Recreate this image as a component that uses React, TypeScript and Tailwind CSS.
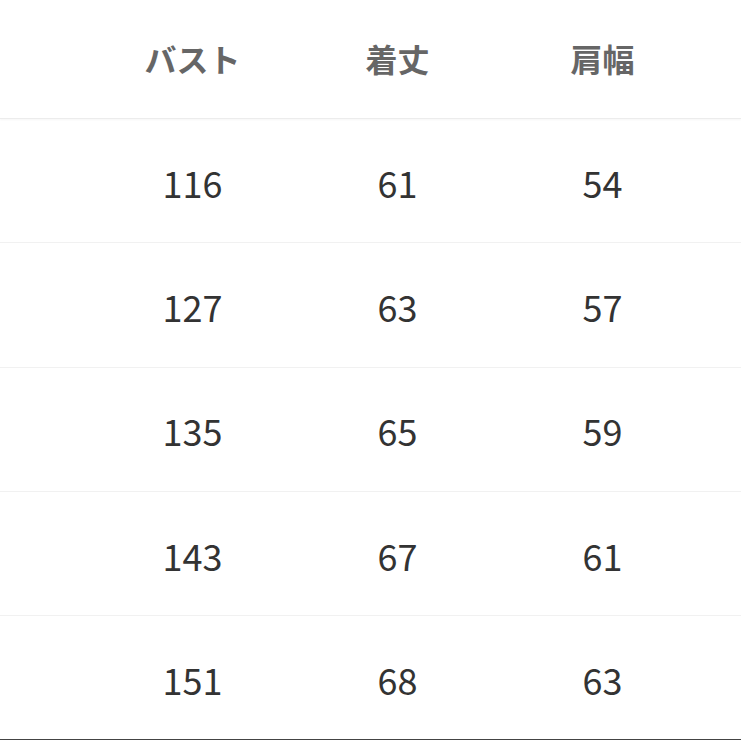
const headers = ['バスト', '着丈', '肩幅']

const rows = [
  ['116', '61', '54'],
  ['127', '63', '57'],
  ['135', '65', '59'],
  ['143', '67', '61'],
  ['151', '68', '63'],
]

export default function App() {
  return (
    <div className="w-[741px] h-[741px] bg-white overflow-hidden font-['Noto_Sans_CJK_JP','Noto_Sans',sans-serif]">
      <div className="h-[119px] grid grid-cols-[205px_205px_205px] pl-[90px] items-center pb-[2px] shadow-[0_1px_2px_rgba(0,0,0,0.04)] border-b border-[#ececec]">
        {headers.map((h) => (
          <div key={h} className="text-center text-[32px] font-bold text-[#666666] leading-none">
            {h}
          </div>
        ))}
      </div>
      {rows.map((r, i) => (
        <div
          key={i}
          className={`h-[124.3px] grid grid-cols-[205px_205px_205px] pl-[90px] items-center pt-[2px] ${
            i === rows.length - 1 ? 'border-b border-[#444444]' : 'border-b border-[#f1f1f1]'
          }`}
        >
          {r.map((v, j) => (
            <div key={j} className="text-center text-[36px] text-[#333333] leading-none">
              {v}
            </div>
          ))}
        </div>
      ))}
    </div>
  )
}
